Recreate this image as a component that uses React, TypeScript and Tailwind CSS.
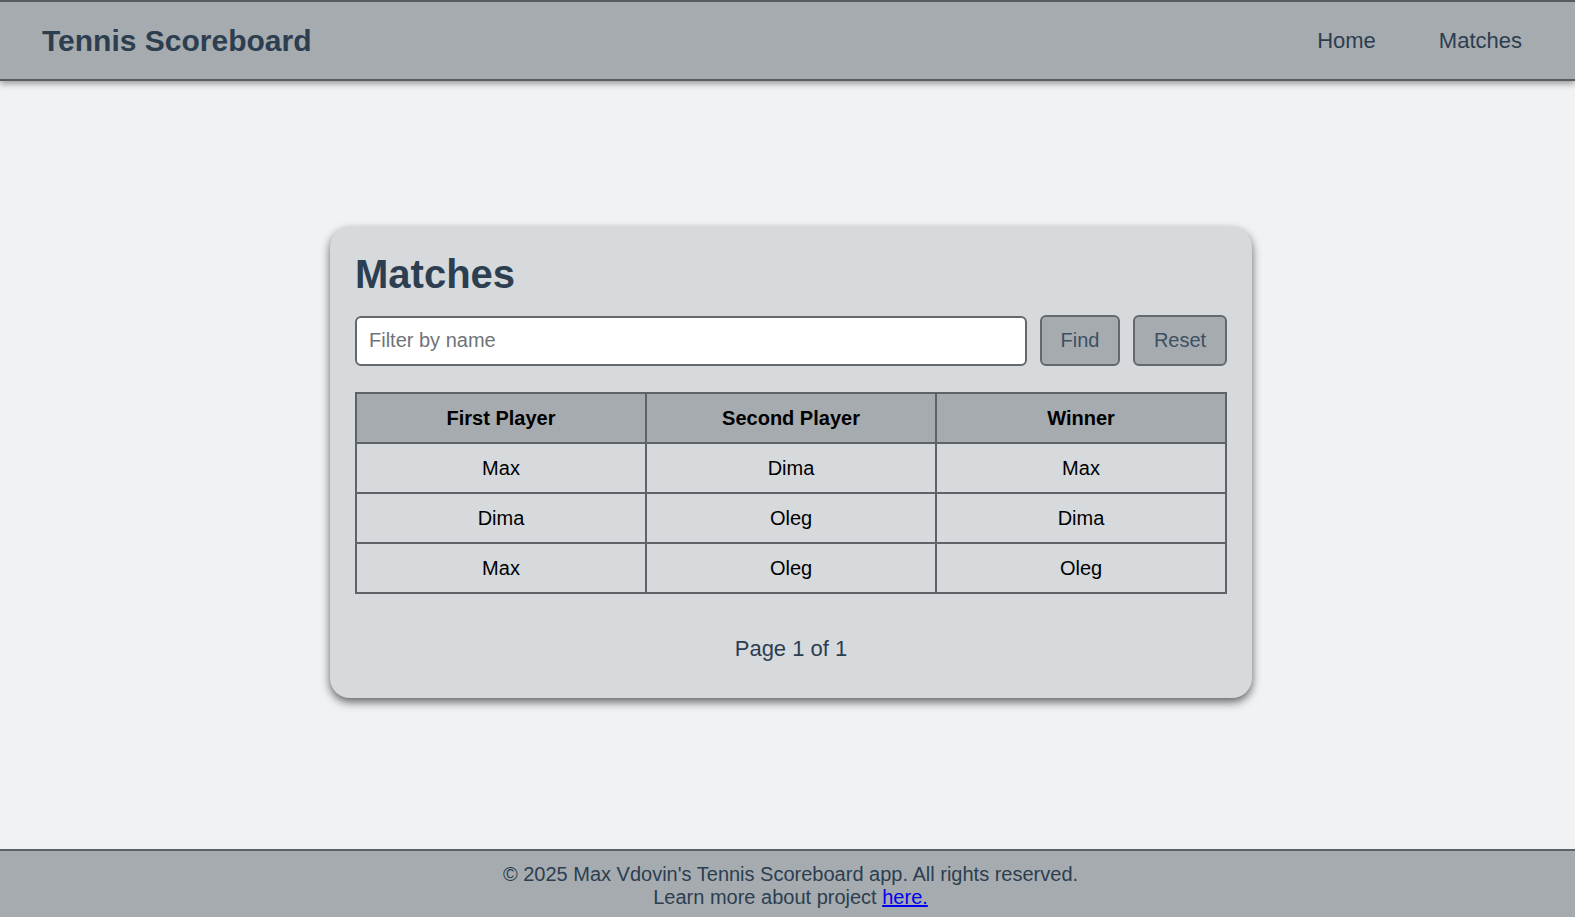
import React from 'react';

const matches = [
  { first: 'Max', second: 'Dima', winner: 'Max' },
  { first: 'Dima', second: 'Oleg', winner: 'Dima' },
  { first: 'Max', second: 'Oleg', winner: 'Oleg' },
];

function Header() {
  return (
    <header className="relative z-10 flex h-[81px] items-center justify-between border-t-2 border-b-2 border-[#575b5f] bg-[#a6abaf] pl-[42px] pr-[53px] shadow-[0_3px_6px_rgba(0,0,0,0.35)]">
      <h1 className="text-[30px] font-bold text-[#2c3e50]">Tennis Scoreboard</h1>
      <nav className="flex items-center gap-[63px] text-[22px] text-[#2c3e50]">
        <a href="#">Home</a>
        <a href="#">Matches</a>
      </nav>
    </header>
  );
}

function MatchesCard() {
  return (
    <div className="mb-[5px] ml-[7px] w-[922px] rounded-[20px] bg-[#d6dadd] px-[25px] pt-[25px] pb-[36px] shadow-[0_4px_10px_rgba(0,0,0,0.6)]">
      <h2 className="mb-[18px] text-[40px] font-bold text-[#2c3e50]">Matches</h2>
      <div className="flex items-center gap-[13px]">
        <input
          type="text"
          placeholder="Filter by name"
          className="h-[50px] flex-1 rounded-[6px] border-2 border-[#65696d] bg-white px-[12px] text-[20px] text-black placeholder:text-[#6f7378] outline-none"
        />
        <button className="h-[51px] w-[80px] rounded-[6px] border-2 border-[#65696d] bg-[#a6abaf] text-[20px] text-[#3d5063]">
          Find
        </button>
        <button className="h-[51px] w-[94px] rounded-[6px] border-2 border-[#65696d] bg-[#a6abaf] text-[20px] text-[#3d5063]">
          Reset
        </button>
      </div>
      <table className="mt-[26px] w-full table-fixed border-collapse border-2 border-[#5f6367] text-[20px] text-black">
        <thead>
          <tr className="h-[50px] bg-[#a6abaf]">
            <th className="border-2 border-[#5f6367] font-bold">First Player</th>
            <th className="border-2 border-[#5f6367] font-bold">Second Player</th>
            <th className="border-2 border-[#5f6367] font-bold">Winner</th>
          </tr>
        </thead>
        <tbody>
          {matches.map((m, i) => (
            <tr key={i} className="h-[50px]">
              <td className="border-2 border-[#5f6367] text-center">{m.first}</td>
              <td className="border-2 border-[#5f6367] text-center">{m.second}</td>
              <td className="border-2 border-[#5f6367] text-center">{m.winner}</td>
            </tr>
          ))}
        </tbody>
      </table>
      <p className="mt-[42px] text-center text-[22px] text-[#2c3e50]">Page 1 of 1</p>
    </div>
  );
}

function Footer() {
  return (
    <footer className="border-t-2 border-[#5f6367] bg-[#a6abaf] pt-[12px] pb-[8px] pl-[6px] text-center text-[20px] leading-[23px] text-[#2c3e50]">
      <p>© 2025 Max Vdovin's Tennis Scoreboard app. All rights reserved.</p>
      <p>
        Learn more about project{' '}
        <a href="#" className="text-[#0000ee] underline">
          here.
        </a>
      </p>
    </footer>
  );
}

export default function App() {
  return (
    <div
      className="flex min-h-screen flex-col bg-[#f1f2f4] leading-[normal]"
      style={{ fontFamily: '"Liberation Sans", Arial, sans-serif' }}
    >
      <Header />
      <main className="flex flex-1 items-center justify-center">
        <MatchesCard />
      </main>
      <Footer />
    </div>
  );
}
